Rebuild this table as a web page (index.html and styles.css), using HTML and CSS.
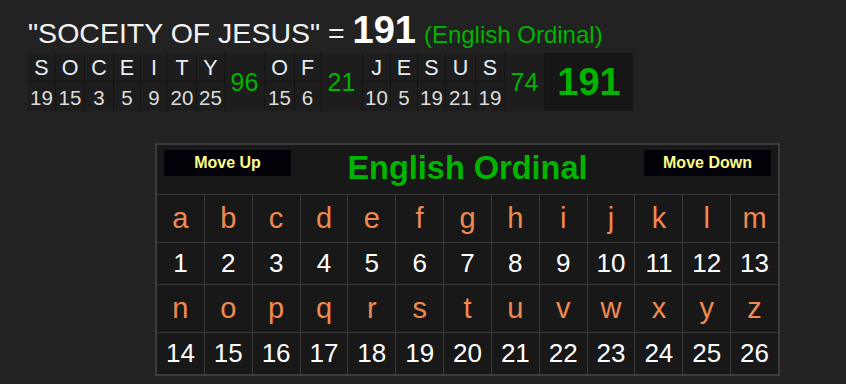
FILE: index.html
```html
<!DOCTYPE html>
<html lang="en">
<head>
<meta charset="utf-8">
<title>Gematria</title>
<link rel="stylesheet" href="styles.css">
</head>
<body>
<div class="title"><span class="phrase">"SOCEITY OF JESUS" = </span><span class="total">191</span> <span class="cipher">(English Ordinal)</span></div>

<div class="breakdown">
  <div class="col w28"><span class="l">S</span><span class="n">19</span></div>
  <div class="col w29"><span class="l">O</span><span class="n">15</span></div>
  <div class="col w29"><span class="l">C</span><span class="n">3</span></div>
  <div class="col w27"><span class="l">E</span><span class="n">5</span></div>
  <div class="col w27"><span class="l">I</span><span class="n">9</span></div>
  <div class="col w29"><span class="l">T</span><span class="n">20</span></div>
  <div class="col w28"><span class="l">Y</span><span class="n">25</span></div>
  <div class="sum w40">96</div>
  <div class="col w30"><span class="l">O</span><span class="n">15</span></div>
  <div class="col w26"><span class="l">F</span><span class="n">6</span></div>
  <div class="sum w42">21</div>
  <div class="col w28"><span class="l">J</span><span class="n">10</span></div>
  <div class="col w27"><span class="l">E</span><span class="n">5</span></div>
  <div class="col w28"><span class="l">S</span><span class="n">19</span></div>
  <div class="col w30"><span class="l">U</span><span class="n">21</span></div>
  <div class="col w29"><span class="l">S</span><span class="n">19</span></div>
  <div class="sum w40">74</div>
  <div class="grand w88">191</div>
</div>

<div class="chart">
  <div class="head">
    <button class="move">Move Up</button>
    <div class="chart-title">English Ordinal</div>
    <button class="move">Move Down</button>
  </div>
  <div class="a">a</div><div class="a">b</div><div class="a">c</div><div class="a">d</div><div class="a">e</div><div class="a">f</div><div class="a">g</div><div class="a">h</div><div class="a">i</div><div class="a">j</div><div class="a">k</div><div class="a">l</div><div class="a">m</div>
  <div class="v">1</div><div class="v">2</div><div class="v">3</div><div class="v">4</div><div class="v">5</div><div class="v">6</div><div class="v">7</div><div class="v">8</div><div class="v">9</div><div class="v">10</div><div class="v">11</div><div class="v">12</div><div class="v">13</div>
  <div class="a">n</div><div class="a">o</div><div class="a">p</div><div class="a">q</div><div class="a">r</div><div class="a">s</div><div class="a">t</div><div class="a">u</div><div class="a">v</div><div class="a">w</div><div class="a">x</div><div class="a">y</div><div class="a">z</div>
  <div class="v">14</div><div class="v">15</div><div class="v">16</div><div class="v">17</div><div class="v">18</div><div class="v">19</div><div class="v">20</div><div class="v">21</div><div class="v">22</div><div class="v">23</div><div class="v">24</div><div class="v">25</div><div class="v">26</div>
</div>
</body>
</html>
```

FILE: styles.css
```css
html, body {
  margin: 0;
  padding: 0;
  background: #222222;
  font-family: "Liberation Sans", Arial, sans-serif;
}

.title {
  height: 53px;
  box-sizing: border-box;
  padding: 11px 0 0 28px;
  line-height: 1;
  white-space: nowrap;
  color: #f2f2f2;
  font-size: 28.5px;
}
.phrase { font-size: 28.5px; }
.total { font-size: 38px; font-weight: bold; color: #ffffff; }
.cipher { font-size: 24px; color: #00b400; }

.breakdown {
  display: flex;
  margin-left: 28px;
  width: 605px;
  height: 58px;
  background: #141414;
}
.col {
  display: flex;
  flex-direction: column;
}
.col .l, .col .n {
  display: block;
  box-sizing: border-box;
  height: 29px;
  line-height: 29px;
  padding-top: 1px;
  text-align: center;
  background: #1d1d1d;
  border-right: 1px solid #141414;
}
.col .l {
  font-size: 21.5px;
  color: #e6eef8;
  border-bottom: 1px solid #141414;
}
.col .n {
  font-size: 20.5px;
  color: #dcdcdc;
}
.sum {
  box-sizing: border-box;
  height: 58px;
  line-height: 58px;
  text-align: center;
  font-size: 25px;
  color: #00b400;
  background: #1d1d1d;
  border-right: 1px solid #141414;
}
.grand {
  height: 58px;
  line-height: 58px;
  text-align: center;
  font-size: 38px;
  font-weight: bold;
  color: #00b400;
  background: #161616;
}
.w26 { width: 26px; }
.w27 { width: 27px; }
.w28 { width: 28px; }
.w29 { width: 29px; }
.w30 { width: 30px; }
.w40 { width: 40px; }
.w42 { width: 42px; }
.w88 { width: 88px; }

.chart {
  margin: 32px 0 0 155px;
  width: 625px;
  box-sizing: border-box;
  border: 2px solid #3c3c3c;
  background: #3a3a3a;
  display: grid;
  grid-template-columns: repeat(13, 1fr);
  grid-template-rows: 49px 47px 41px 47px 41px;
  gap: 1px;
}
.head {
  grid-column: 1 / -1;
  background: #181818;
  display: flex;
  justify-content: space-between;
  align-items: flex-start;
  padding: 5px 7px 0;
}
.move {
  width: 127px;
  height: 26px;
  border: 0;
  padding: 0;
  margin: 0;
  background: #020208;
  color: #ffff8a;
  font-family: "Liberation Sans", Arial, sans-serif;
  font-weight: bold;
  font-size: 16px;
  line-height: 26px;
}
.chart-title {
  margin-top: 2px;
  font-size: 32.5px;
  line-height: 1;
  font-weight: bold;
  color: #00b400;
}
.a, .v {
  background: #181818;
  text-align: center;
}
.a {
  color: #f08a50;
  font-size: 29px;
  line-height: 47px;
}
.v {
  color: #ffffff;
  font-size: 26px;
  line-height: 41px;
}
```
